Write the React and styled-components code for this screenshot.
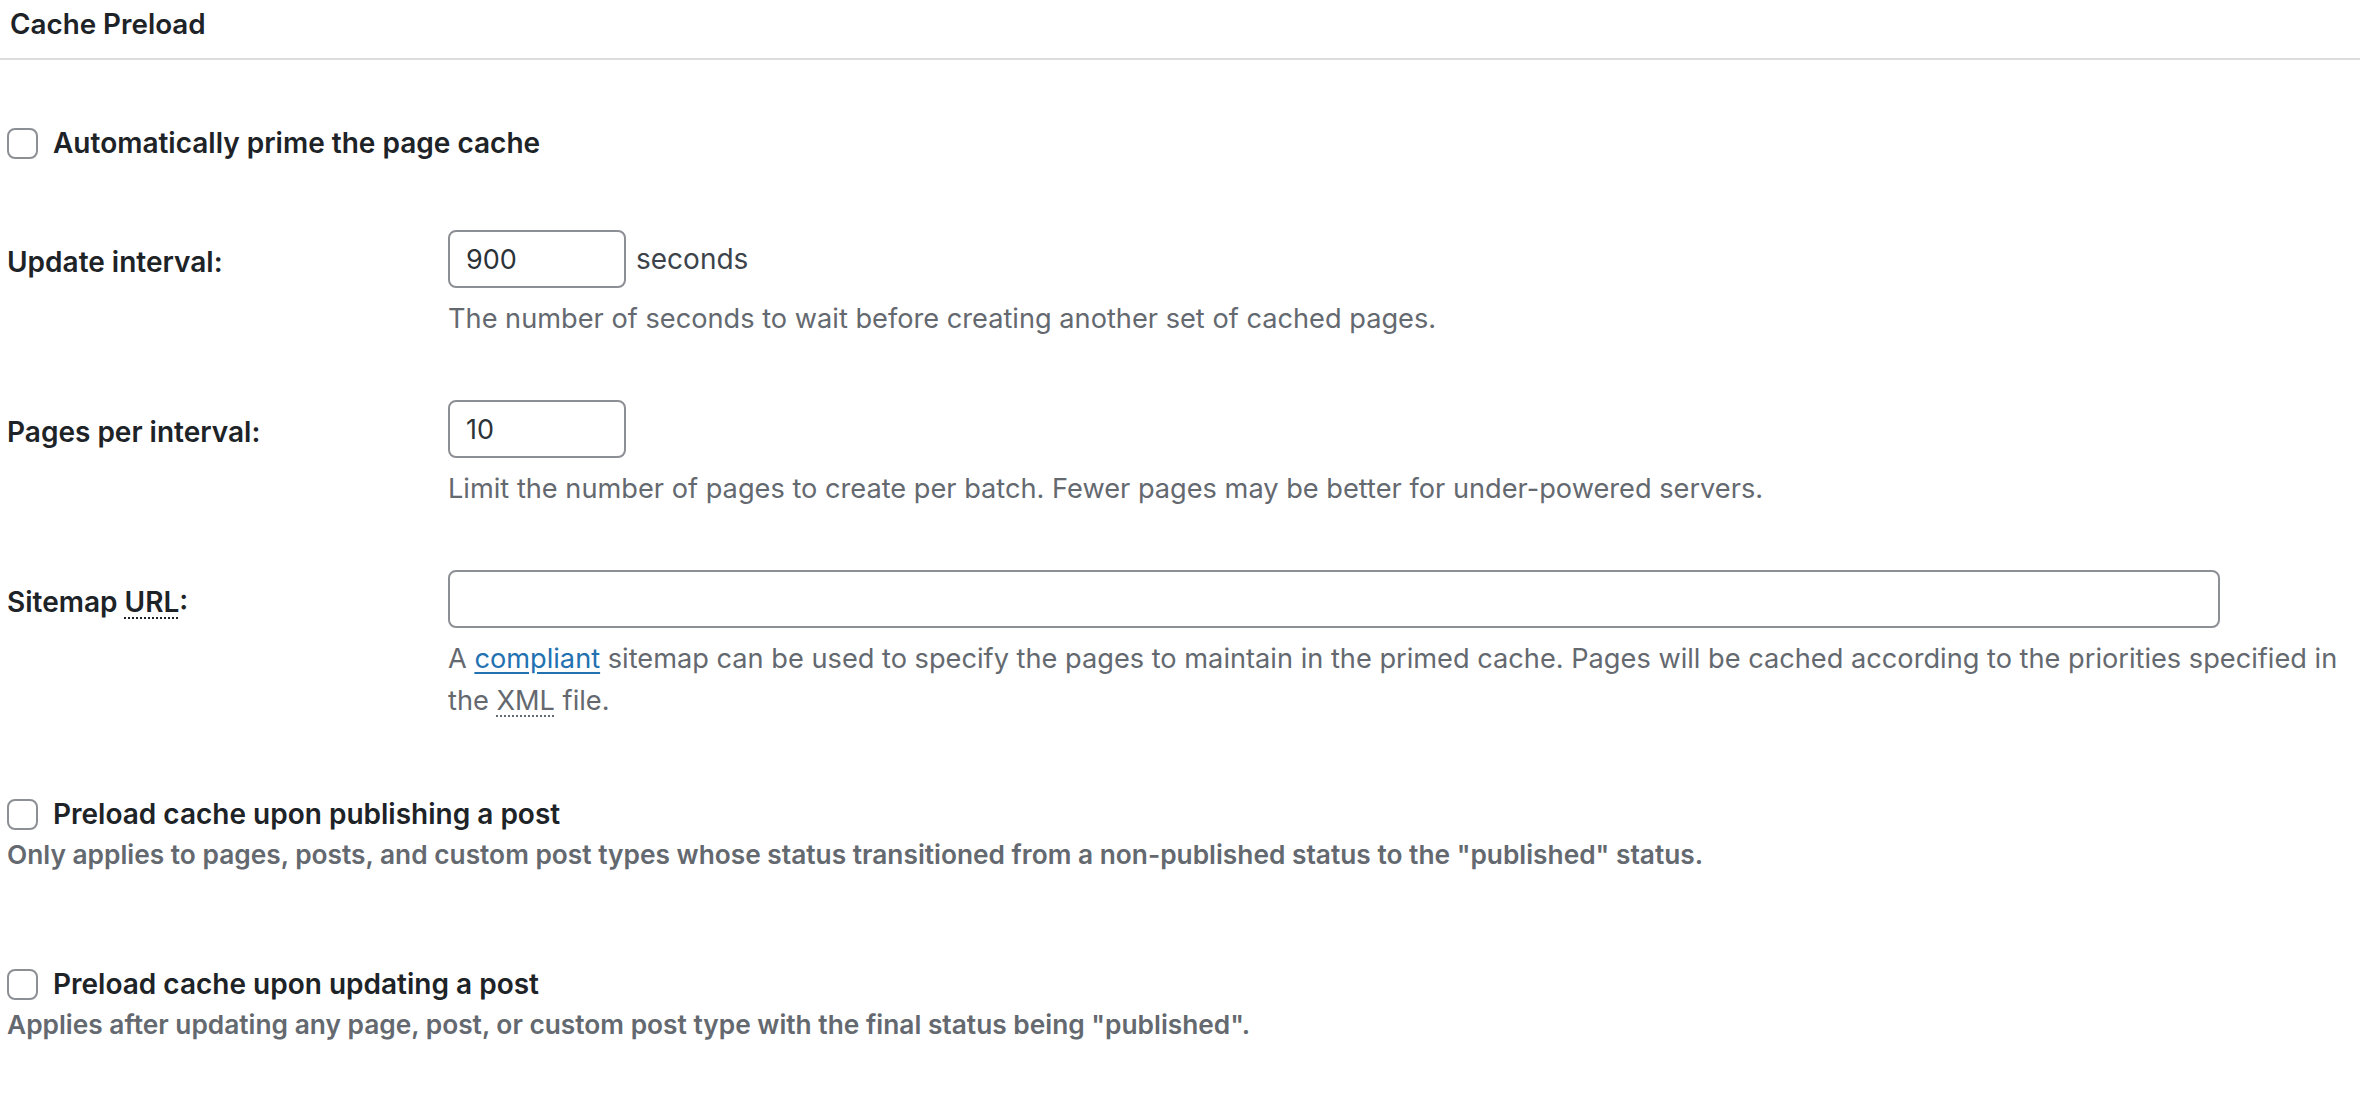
import React from "react";
import styled, { createGlobalStyle } from "styled-components";

const GlobalStyle = createGlobalStyle`
  html, body {
    margin: 0;
    padding: 0;
    background: #ffffff;
  }
  body {
    font-family: Inter, "Noto Sans", "Liberation Sans", sans-serif;
    color: #3c434a;
  }
  * {
    box-sizing: border-box;
  }
`;

export default function App() {
  return (
    <Page>
      <GlobalStyle />
      <Header>Cache Preload</Header>

      <CheckRow $top={62} $bottom={36}>
        <CheckLine>
          <Box type="checkbox" />
          <CheckLabel>Automatically prime the page cache</CheckLabel>
        </CheckLine>
      </CheckRow>

      <FieldRow>
        <FieldLabel>Update interval:</FieldLabel>
        <FieldBody>
          <InputLine>
            <TextInput defaultValue="900" />
            <Unit>seconds</Unit>
          </InputLine>
          <Description>
            The number of seconds to wait before creating another set of cached pages.
          </Description>
        </FieldBody>
      </FieldRow>

      <FieldRow>
        <FieldLabel>Pages per interval:</FieldLabel>
        <FieldBody>
          <InputLine>
            <TextInput defaultValue="10" />
          </InputLine>
          <Description>
            Limit the number of pages to create per batch. Fewer pages may be better for
            under-powered servers.
          </Description>
        </FieldBody>
      </FieldRow>

      <FieldRow>
        <FieldLabel>
          Sitemap <Abbr title="Uniform Resource Locator">URL</Abbr>:
        </FieldLabel>
        <FieldBody>
          <InputLine>
            <TextInput $wide defaultValue="" />
          </InputLine>
          <Description>
            A <Link href="#">compliant</Link> sitemap can be used to specify the pages to
            maintain in the primed cache. Pages will be cached according to the priorities
            specified in the <Abbr title="Extensible Markup Language">XML</Abbr> file.
          </Description>
        </FieldBody>
      </FieldRow>

      <CheckRow $top={41} $bottom={48}>
        <CheckLine>
          <Box type="checkbox" />
          <CheckLabel>Preload cache upon publishing a post</CheckLabel>
        </CheckLine>
        <CheckNote>
          Only applies to pages, posts, and custom post types whose status transitioned from
          a non-published status to the "published" status.
        </CheckNote>
      </CheckRow>

      <CheckRow $top={41} $bottom={48}>
        <CheckLine>
          <Box type="checkbox" />
          <CheckLabel>Preload cache upon updating a post</CheckLabel>
        </CheckLine>
        <CheckNote>
          Applies after updating any page, post, or custom post type with the final status
          being "published".
        </CheckNote>
      </CheckRow>
    </Page>
  );
}

const Page = styled.div`
  width: 100%;
  min-height: 1094px;
  background: #ffffff;
`;

const Header = styled.h3`
  margin: 0;
  height: 60px;
  padding: 5px 10px 0;
  font-size: 27.8px;
  line-height: 38px;
  font-weight: 600;
  color: #1d2327;
  border-bottom: 2px solid #dcdcde;
`;

const CheckRow = styled.div`
  padding: ${(p) => p.$top}px 0 ${(p) => p.$bottom}px 7px;
`;

const CheckLine = styled.label`
  display: flex;
  align-items: center;
  gap: 15px;
  height: 42px;
`;

const Box = styled.input`
  appearance: none;
  -webkit-appearance: none;
  margin: 0;
  width: 31px;
  height: 31px;
  border: 2px solid #8c8f94;
  border-radius: 8px;
  background: #ffffff;
  flex-shrink: 0;
`;

const CheckLabel = styled.span`
  font-size: 28px;
  line-height: 42px;
  font-weight: 600;
  color: #1d2327;
`;

const CheckNote = styled.div`
  font-size: 26.3px;
  line-height: 39px;
  font-weight: 600;
  color: #646970;
`;

const FieldRow = styled.div`
  display: grid;
  grid-template-columns: 441px 1fr;
  padding: 30px 20px 30px 7px;
`;

const FieldLabel = styled.div`
  padding-top: 11px;
  font-size: 28px;
  line-height: 42px;
  font-weight: 600;
  color: #1d2327;
`;

const FieldBody = styled.div`
  display: flex;
  flex-direction: column;
`;

const InputLine = styled.div`
  display: flex;
  align-items: center;
  gap: 10px;
  height: 58px;
`;

const TextInput = styled.input`
  width: ${(p) => (p.$wide ? "1772px" : "178px")};
  height: 58px;
  margin: 0;
  padding: 0 16px;
  border: 2px solid #8c8f94;
  border-radius: 8px;
  background: #ffffff;
  font-family: Inter, "Noto Sans", "Liberation Sans", sans-serif;
  font-size: 27px;
  color: #2c3338;
  outline: none;
`;

const Unit = styled.span`
  font-size: 28px;
  line-height: 42px;
  color: #3c434a;
`;

const Description = styled.p`
  margin: 10px 0 0;
  font-size: 27.2px;
  line-height: 42px;
  color: #646970;
`;

const Link = styled.a`
  color: #2271b1;
  text-decoration: underline;
  text-underline-offset: 4px;
`;

const Abbr = styled.abbr`
  text-decoration: underline dotted;
  text-decoration-thickness: 2px;
  text-underline-offset: 5px;
  cursor: help;
`;
